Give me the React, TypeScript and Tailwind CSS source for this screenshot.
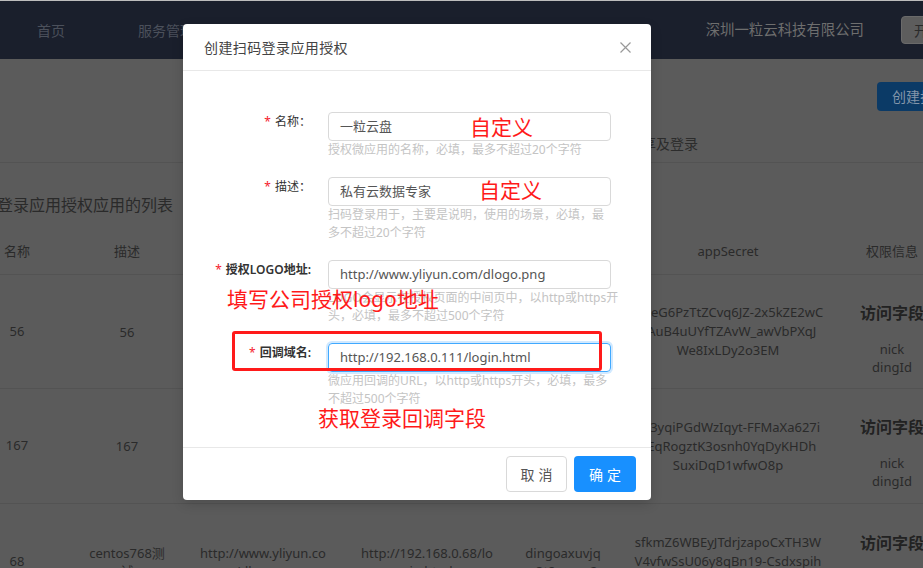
import React from "react";

const FONT = "font-['Noto_Sans','Noto_Sans_CJK_SC',sans-serif]";

function FormItem({
  label,
  bold,
  value,
  help,
  focused,
}: {
  label: string;
  bold?: boolean;
  value: string;
  help: string[];
  focused?: boolean;
}) {
  return (
    <div className="flex mb-[18px]">
      <div
        className={`w-[128px] text-right text-[12px] leading-[20px] text-[#333] whitespace-nowrap ${
          bold ? "font-semibold" : ""
        }`}
      >
        <span className="text-[#f5222d] mr-[4px] font-normal">*</span>
        {label}
      </div>
      <div className="ml-[17px] w-[283px]">
        <div
          className={`h-[29px] rounded-[4px] border flex items-center pl-[11px] text-[13px] text-[#555] ${
            focused
              ? "border-[#40a9ff] shadow-[0_0_0_2px_rgba(24,144,255,0.2)]"
              : "border-[#d9d9d9]"
          }`}
        >
          {value}
        </div>
        {help.map((h, i) => (
          <div key={i} className="text-[12px] leading-[18px] text-[#c4c4c4] whitespace-nowrap">
            {h}
          </div>
        ))}
      </div>
    </div>
  );
}

function SecretCell({ lines }: { lines: string[] }) {
  return (
    <div className="flex flex-col items-center leading-[19px] whitespace-nowrap">
      {lines.map((l, i) => (
        <span key={i}>{l}</span>
      ))}
    </div>
  );
}

function PermCell() {
  return (
    <div className="flex flex-col items-center pt-[14px] whitespace-nowrap">
      <span className="text-[16px] font-bold leading-[22px] mb-[16px] text-[#222]">访问字段</span>
      <span className="leading-[18px]">nick</span>
      <span className="leading-[18px]">dingId</span>
    </div>
  );
}

function TwoLine({ lines }: { lines: string[] }) {
  return (
    <div className="flex flex-col items-center leading-[18px] whitespace-nowrap">
      {lines.map((l, i) => (
        <span key={i}>{l}</span>
      ))}
    </div>
  );
}

const rows = [
  {
    h: "h-[114px]",
    name: "56",
    desc: "56",
    logo: ["http://www.yliyun.co", "m/dlogo.png"],
    cb: ["http://192.168.0.56/lo", "gin.html"],
    key: ["dingoa9nmt", "yxbyfw3"],
    secret: ["QbeG6PzTtZCvq6JZ-2x5kZE2wC", "XAuB4uUYfTZAvW_awVbPXqJ", "We8IxLDy2o3EM"],
  },
  {
    h: "h-[115px]",
    name: "167",
    desc: "167",
    logo: ["http://www.yliyun.co", "m/dlogo.png"],
    cb: ["http://192.168.0.167/l", "ogin.html"],
    key: ["dingoakrpe", "gqwlx2c"],
    secret: ["x83yqiPGdWzIqyt-FFMaXa627i", "6EqRogztK3osnh0YqDyKHDh", "SuxiDqD1wfwO8p"],
  },
  {
    h: "h-[116px]",
    name: "68",
    desc: "centos768测|试",
    logo: ["http://www.yliyun.co", "m/dlogo.png"],
    cb: ["http://192.168.0.68/lo", "gin.html"],
    key: ["dingoaxuvjq", "e3t8vmrw2"],
    secret: ["sfkmZ6WBEyJTdrjzapoCxTH3W", "V4vfwSsU06y8qBn19-Csdxspih", "T0mR3x"],
  },
];

export default function App() {
  return (
    <div className={`relative w-[923px] h-[568px] overflow-hidden bg-[#5b5b5b] ${FONT}`}>
      <div className="h-[1px] bg-[#bdbdbd]" />
      {/* nav */}
      <div className="h-[58px] bg-[#1a1f2c] flex items-center pl-[37px]">
        <div className="flex gap-[73px] text-[14px] text-[#4b505b]">
          <span>首页</span>
          <span>服务管理</span>
          <span>应用管理</span>
        </div>
        <div className="ml-auto flex items-center gap-[37px] mr-[-74px]">
          <span className="text-[14.4px] text-[#6e6e6e]">深圳一粒云科技有限公司</span>
          <span className="h-[28px] px-[12px] flex items-center rounded-[4px] bg-[#5d5d5d] border border-[#6a6a6a] text-[14px] text-[#2a2a2a] whitespace-nowrap">
            开发者中心
          </span>
        </div>
      </div>

      {/* action row */}
      <div className="pt-[23px] flex justify-end">
        <span className="h-[29px] px-[15px] mr-[-124px] flex items-center rounded-[4px] bg-[#0b3a66] text-[14px] text-[#8496aa] whitespace-nowrap">
          创建扫码登录应用授权
        </span>
      </div>
      {/* tabs */}
      <div className="h-[52px] flex items-end pb-[9px] pl-[440px] gap-[48px] border-b border-[#535353] text-[14px] leading-[18px] text-[#2c2c2c]">
        <span>扫码登录应用授权</span>
        <span>扫码分享及登录</span>
      </div>

      {/* title */}
      <div className="mt-[33px] ml-[-35px] text-[16px] leading-[18px] text-[#2a2a2a] whitespace-nowrap">
        扫码登录应用授权应用的列表
      </div>

      {/* table */}
      <div className="mt-[15px] ml-[-38px] text-[13px] text-[#2a2a2a]">
        <div className="grid grid-cols-[110px_110px_162px_166px_106px_224px_104px] h-[46px] items-center border-b border-[#535353] text-center whitespace-nowrap">
          <span>名称</span>
          <span>描述</span>
          <span>LOGO地址</span>
          <span>回调域名</span>
          <span>appKey</span>
          <span>appSecret</span>
          <span>权限信息</span>
        </div>
        {rows.map((r, i) => (
          <div
            key={i}
            className={`grid grid-cols-[110px_110px_162px_166px_106px_224px_104px] ${r.h} items-center border-b border-[#535353] text-center`}
          >
            <span>{r.name}</span>
            <TwoLine lines={r.desc.split("|")} />
            <TwoLine lines={r.logo} />
            <TwoLine lines={r.cb} />
            <TwoLine lines={r.key} />
            <SecretCell lines={r.secret} />
            <PermCell />
          </div>
        ))}
      </div>

      {/* modal */}
      <div className="absolute left-[183px] top-[24px] w-[468px] bg-white rounded-[4px] shadow-[0_4px_12px_rgba(0,0,0,0.15)]">
        <div className="h-[47px] border-b border-[#e8e8e8] flex items-center pl-[21px] pr-[20px]">
          <span className="text-[14px] text-[#444] tracking-[0.4px]">创建扫码登录应用授权</span>
          <svg className="ml-auto" width="11" height="11" viewBox="0 0 11 11">
            <path d="M0.5 0.5 L10.5 10.5 M10.5 0.5 L0.5 10.5" stroke="#999" strokeWidth="1.2" />
          </svg>
        </div>
        <div className="pt-[41px] pb-[21px]">
          <FormItem label="名称：" value="一粒云盘" help={["授权微应用的名称，必填，最多不超过20个字符"]} />
          <FormItem
            label="描述："
            value="私有云数据专家"
            help={["扫码登录用于，主要是说明，使用的场景，必填，最", "多不超过20个字符"]}
          />
          <FormItem
            label="授权LOGO地址:"
            bold
            value="http://www.yliyun.com/dlogo.png"
            help={["LOGO会显示在授权页面的中间页中，以http或https开", "头，必填，最多不超过500个字符"]}
          />
          <FormItem
            label="回调域名:"
            bold
            focused
            value="http://192.168.0.111/login.html"
            help={["微应用回调的URL，以http或https开头，必填，最多", "不超过500个字符"]}
          />
        </div>
        <div className="border-t border-[#e8e8e8] flex justify-end gap-[7px] pt-[8px] pb-[8px] pr-[15px]">
          <span className="w-[61px] h-[36px] flex items-center justify-center rounded-[4px] border border-[#d9d9d9] text-[14px] text-[#555] tracking-[4px] pl-[4px]">
            取消
          </span>
          <span className="w-[62px] h-[36px] flex items-center justify-center rounded-[4px] bg-[#1890ff] text-[14px] text-white tracking-[4px] pl-[4px]">
            确定
          </span>
        </div>

        {/* annotations */}
        <span className="absolute left-[287px] top-[93px] text-[21px] leading-none text-[#ff1a1a] whitespace-nowrap">
          自定义
        </span>
        <span className="absolute left-[296px] top-[156px] text-[21px] leading-none text-[#ff1a1a] whitespace-nowrap">
          自定义
        </span>
        <span className="absolute left-[44px] top-[265px] text-[21px] leading-none text-[#ff1a1a] whitespace-nowrap">
          填写公司授权logo地址
        </span>
        <div className="absolute left-[49px] top-[307px] w-[370px] h-[40px] border-[3px] border-[#ff1a1a] rounded-[3px]" />
        <span className="absolute left-[135px] top-[384px] text-[21px] leading-none text-[#ff1a1a] whitespace-nowrap">
          获取登录回调字段
        </span>
      </div>
    </div>
  );
}
